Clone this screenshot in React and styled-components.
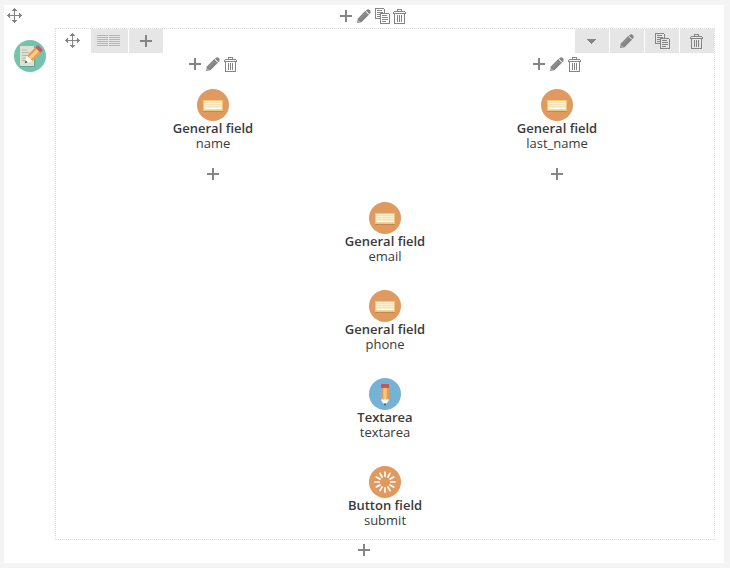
import React from "react";
import styled, { createGlobalStyle } from "styled-components";

const Global = createGlobalStyle`
  * { box-sizing: border-box; }
  body { margin: 0; background: #f4f4f4; font-family: "Open Sans", sans-serif; font-size: 13px; line-height: 15px; color: #3a3a3a; }
  svg { display: block; flex: none; }
`;

const Page = styled.div`
  height: 568px;
  padding: 5px 6px 5px 4px;
`;
const Panel = styled.main`
  height: 558px;
  background: #fff;
  display: flex;
  flex-direction: column;
`;
const TopBar = styled.header`
  height: 23px;
  padding: 3px 3px 0;
  display: grid;
  grid-template-columns: 1fr auto 1fr;
  align-items: start;
`;
const Actions = styled.div`
  display: flex;
  align-items: center;
  height: 16px;
  margin-left: ${(p) => p.$shift || 0}px;
  & > svg + svg { margin-left: 4px; }
  & > svg:nth-child(2) { margin-left: 5px; }
  & > svg:nth-child(4) { margin-left: 3px; }
`;
const Body = styled.div`
  display: flex;
  padding: 0 9px 0 10px;
`;
const Side = styled.aside`
  width: 41px;
  padding-top: 12px;
`;
const Row = styled.section`
  width: 660px;
  height: 512px;
  border: 1px dotted #dedede;
`;
const Toolbar = styled.nav`
  display: flex;
  height: 24px;
`;
const Handle = styled.div`
  width: 35px;
  padding: 4px 0 0 9px;
`;
const Group = styled.div`
  display: flex;
  gap: 1px;
  margin-left: ${(p) => (p.$end ? "auto" : 0)};
`;
const Tool = styled.button`
  width: ${(p) => p.$w || 34}px;
  height: 24px;
  padding: ${(p) => p.$pad};
  border: 0;
  background: #e6e6e6;
  display: flex;
  align-items: flex-start;
`;
const Columns = styled.div`
  display: grid;
  grid-template-columns: 1fr 1fr;
  column-gap: 30px;
  padding-top: 3px;
`;
const Column = styled.div`
  display: flex;
  flex-direction: column;
  align-items: center;
`;
const FieldBox = styled.div`
  display: flex;
  flex-direction: column;
  align-items: center;
  margin-top: 17px;
  height: 62px;
`;
const Title = styled.strong`
  font-weight: 600;
`;
const AddSlot = styled.div`
  margin-top: 17px;
`;
const Stack = styled.div`
  display: flex;
  flex-direction: column;
  align-items: center;
  gap: 9px;
  padding-top: 5px;
`;
const Bottom = styled.footer`
  display: flex;
  justify-content: center;
  padding-top: 4px;
`;

const G = "#858585";

const Plus = () => (
  <svg width="12" height="12" fill={G} shapeRendering="crispEdges"><path d="M5 0h2v5h5v2H7v5H5V7H0V5h5z" /></svg>
);
const Move = () => (
  <svg width="15" height="15" fill={G} shapeRendering="crispEdges">
    <path d="M7 0h1v15H7zM0 7h15v1H0zM6 1h3v1H6zM5 2h5v1H5zM6 13h3v1H6zM5 12h5v1H5zM1 6h1v3H1zM2 5h1v5H2zM13 6h1v3h-1zM12 5h1v5h-1z" />
  </svg>
);
const Pencil = () => (
  <svg width="14" height="14" fill={G}>
    <path d="M0 14 .8 9.5 8 2.3 11.7 6 4.5 13.2z" />
    <path d="M10.3.5Q11.5-.4 12.8 1T13.5 3.7L12.2 5 9 1.8z" />
    <path d="M8.2 2.2 11.8 5.8M9.4 1.2 12.8 4.6" stroke={G} strokeWidth="1" strokeDasharray="1 1" />
    <path d="M2.8 9.8 8.4 4.2" stroke="#a2a2a2" strokeWidth=".6" />
    <path d="M1.1 11.7 2.4 13" stroke="#e6e6e6" strokeWidth=".8" />
  </svg>
);
const Copy = () => (
  <svg width="15" height="16" fill="none" stroke={G} shapeRendering="crispEdges">
    <path d="M5 10.5H.5V.5h8l1 1V5M2 2.5h5M2 4.5h6M2 6.5h3M2 8.5h3" />
    <path d="M5.5 5.5h8l1 1v9h-9zM7 7.5h5M7 9.5h6M7 11.5h6M7 13.5h4" />
  </svg>
);
const Trash = () => (
  <svg width="13" height="15" fill="none" stroke={G} shapeRendering="crispEdges">
    <path d="M4.5 2V.5h4V2M1 2.5h11M0 4.5h13M.5 3v1M12.5 3v1M1.5 5v9.5h10V5M4.5 6v7M6.5 6v7M8.5 6v7" />
  </svg>
);
const Lines = () => (
  <svg width="23" height="12" stroke="#b5b5b5" shapeRendering="crispEdges">
    {[0.5, 2.5, 4.5, 6.5, 8.5, 10.5].map((y) => <path key={y} d={`M0 ${y}h11M12 ${y}h11`} />)}
  </svg>
);
const Caret = () => (
  <svg width="9" height="5" fill={G} shapeRendering="crispEdges"><path d="M0 0h9v1H8v1H7v1H6v1H5v1H4V4H3V3H2V2H1V1H0z" /></svg>
);

const Keyboard = () => (
  <svg width="32" height="32">
    <circle cx="16" cy="16" r="16" fill="#e0995e" />
    <path d="M6 12h20v11H6z" fill="#c98449" />
    <path d="M6 11h20v11H6z" fill="#f0c679" />
    <path d="M7 12h18v8.5H7z" fill="#fbefcf" />
    <path d="M7 13.5h18M7 15.5h18M7 17.5h18" stroke="#f0dfb4" strokeWidth=".8" />
    <path d="M8 19.5h3M12 19.5h8M21 19.5h3" stroke="#fff" />
  </svg>
);
const PencilBadge = () => (
  <svg width="32" height="32">
    <circle cx="16" cy="16" r="16" fill="#76b2d6" />
    <path d="M12 9h8v13h-8z" fill="#f4c77b" />
    <path d="M12 10h2.3v12H12z" fill="#e0995e" />
    <path d="M17.7 10H20v12h-2.3z" fill="#e69b55" />
    <path d="M12 10V7q0-1 1-1h6q1 0 1 1v3z" fill="#ca5557" />
    <path d="m12 22 1.3-1 1.3 1 1.4-1 1.4 1 1.3-1 1.3 1-4 6z" fill="#fff" />
    <path d="M14.5 25.4h3L16 28.2z" fill="#41505f" />
  </svg>
);
const Spinner = () => (
  <svg width="32" height="32">
    <circle cx="16" cy="16" r="16" fill="#e0995e" />
    {Array.from({ length: 12 }, (_, i) => (
      <path key={i} d="M16 6v4.2" stroke="#fff" strokeWidth="1.7" strokeLinecap="round" transform={`rotate(${i * 30} 16 16)`} />
    ))}
  </svg>
);
const FormBadge = () => (
  <svg width="32" height="32">
    <circle cx="16" cy="16" r="16" fill="#76c2af" />
    <path d="M7 7h13q1 0 1 1v19H7q-1 0-1-1V8q0-1 1-1z" fill="#5fa593" />
    <path d="M7 6h12q1 0 1 1v19H7q-1 0-1-1V7q0-1 1-1z" fill="#e0e0d1" />
    <path d="M8 10h5M8 12.5h7M8 15.5h6M8 18h4M8 20.5h3" stroke="#b5b9ac" strokeWidth="1.2" />
    <g transform="rotate(45 19 15)">
      <path d="M15.3 8h7.4v12h-7.4z" fill="#f5cf87" />
      <path d="M15.3 8h2.1v12h-2.1zM20.6 8h2.1v12h-2.1z" fill="#e69b55" />
      <path d="M15.3 8V5.8q0-1.5 1.5-1.5h4.4q1.5 0 1.5 1.5V8z" fill="#c75c5c" />
      <path d="M15.3 20q1-1 2.2 0 1.4-1 3 0 1-1 2.2 0L19 26.5z" fill="#fff" />
      <path d="M17.6 24h2.8L19 26.7z" fill="#41505f" />
    </g>
  </svg>
);

const Field = ({ icon, title, name }) => (
  <FieldBox>
    {icon}
    <Title>{title}</Title>
    <span>{name}</span>
  </FieldBox>
);

const FieldColumn = ({ name }) => (
  <Column>
    <Actions><Plus /><Pencil /><Trash /></Actions>
    <Field icon={<Keyboard />} title="General field" name={name} />
    <AddSlot><Plus /></AddSlot>
  </Column>
);

export default function App() {
  return (
    <>
      <Global />
      <Page>
        <Panel>
          <TopBar>
            <Move />
            <Actions $shift={18}><Plus /><Pencil /><Copy /><Trash /></Actions>
          </TopBar>
          <Body>
            <Side><FormBadge /></Side>
            <Row>
              <Toolbar>
                <Handle><Move /></Handle>
                <Group>
                  <Tool $w={37} $pad="6px 0 0 6px"><Lines /></Tool>
                  <Tool $pad="6px 0 0 11px"><Plus /></Tool>
                </Group>
                <Group $end>
                  <Tool $pad="10px 0 0 12px"><Caret /></Tool>
                  <Tool $pad="5px 0 0 10px"><Pencil /></Tool>
                  <Tool $pad="4px 0 0 10px"><Copy /></Tool>
                  <Tool $pad="5px 0 0 10px"><Trash /></Tool>
                </Group>
              </Toolbar>
              <Columns>
                <FieldColumn name="name" />
                <FieldColumn name="last_name" />
              </Columns>
              <Stack>
                <Field icon={<Keyboard />} title="General field" name="email" />
                <Field icon={<Keyboard />} title="General field" name="phone" />
                <Field icon={<PencilBadge />} title="Textarea" name="textarea" />
                <Field icon={<Spinner />} title="Button field" name="submit" />
              </Stack>
            </Row>
          </Body>
          <Bottom><Plus /></Bottom>
        </Panel>
      </Page>
    </>
  );
}
